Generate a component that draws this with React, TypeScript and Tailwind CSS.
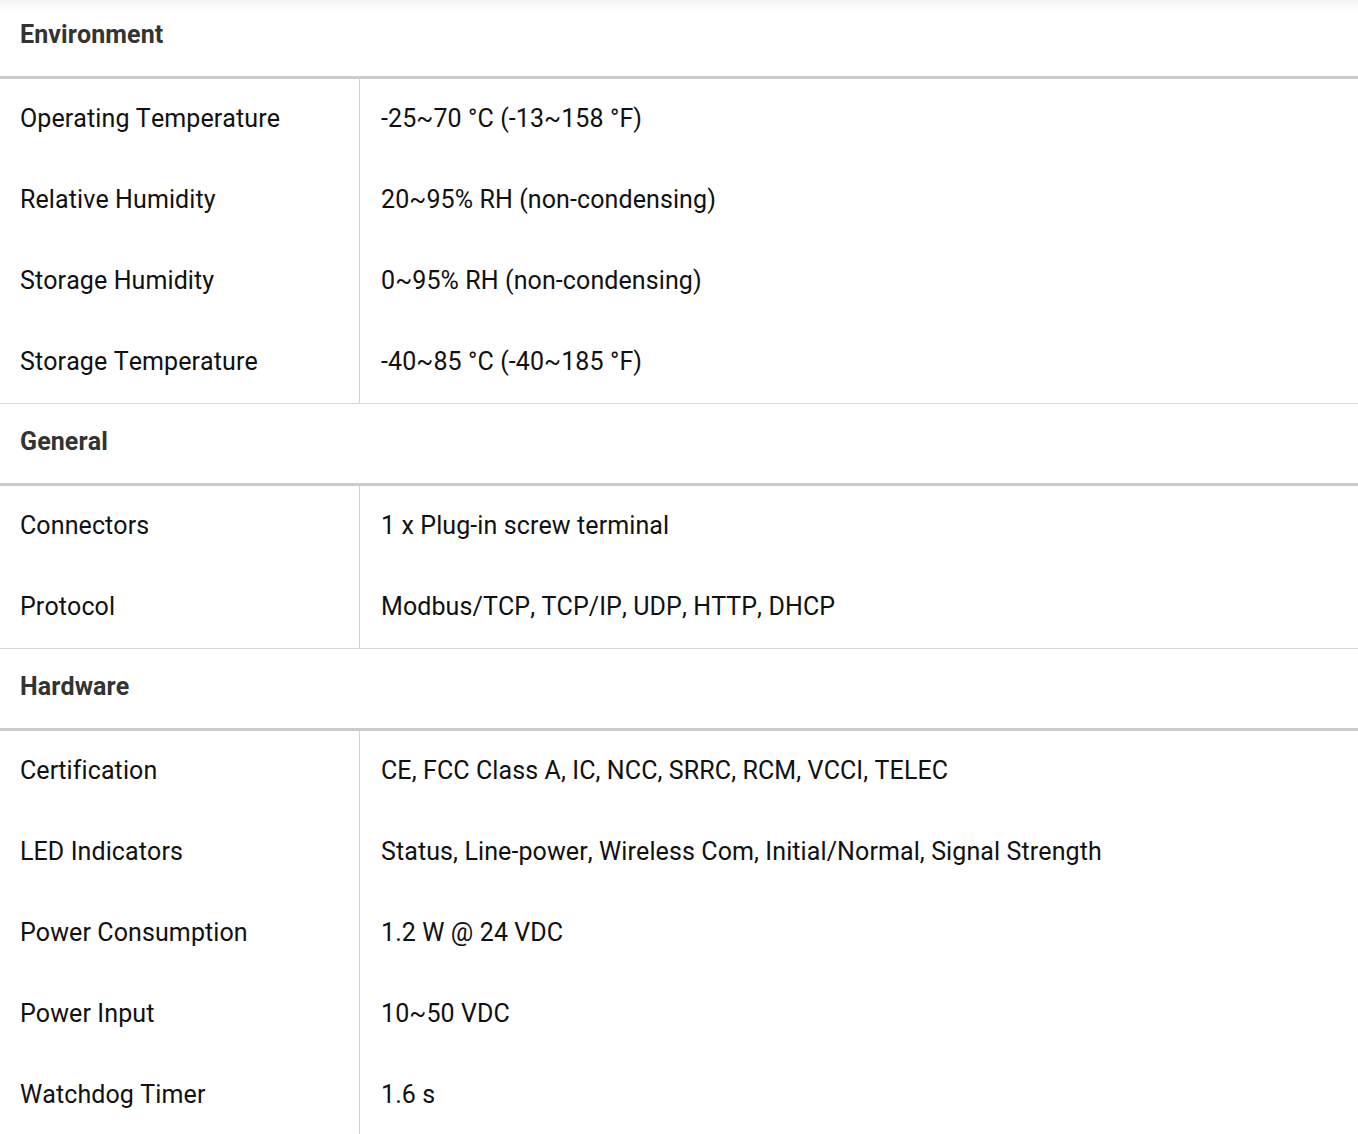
const sections = [
  {
    title: 'Environment',
    rows: [
      ['Operating Temperature', '-25~70 °C (-13~158 °F)'],
      ['Relative Humidity', '20~95% RH (non-condensing)'],
      ['Storage Humidity', '0~95% RH (non-condensing)'],
      ['Storage Temperature', '-40~85 °C (-40~185 °F)'],
    ],
  },
  {
    title: 'General',
    rows: [
      ['Connectors', '1 x Plug-in screw terminal'],
      ['Protocol', 'Modbus/TCP, TCP/IP, UDP, HTTP, DHCP'],
    ],
  },
  {
    title: 'Hardware',
    rows: [
      ['Certification', 'CE, FCC Class A, IC, NCC, SRRC, RCM, VCCI, TELEC'],
      ['LED Indicators', 'Status, Line-power, Wireless Com, Initial/Normal, Signal Strength'],
      ['Power Consumption', '1.2 W @ 24 VDC'],
      ['Power Input', '10~50 VDC'],
      ['Watchdog Timer', '1.6 s'],
    ],
  },
];

export default function App() {
  return (
    <div className="relative h-[1134px] overflow-hidden bg-white font-['Roboto',sans-serif] text-[25px] tracking-[0.1px] [font-kerning:none]">
      {/* shadow from the header above */}
      <div className="pointer-events-none absolute inset-x-0 top-0 z-10 h-[12px] bg-gradient-to-b from-black/[0.04] to-transparent" />
      <div className="-mt-[3px]">
        {sections.map((section, si) => (
          <div key={section.title} className={si > 0 ? 'border-t border-[#d6d6d6]' : ''}>
            <div className="flex h-[82px] items-center border-b-[3px] border-[#cccccc] px-[20px] pb-[3px]">
              <h3 className="font-bold text-[#333333]">{section.title}</h3>
            </div>
            <div className="grid grid-cols-[360px_1fr]">
              {section.rows.map(([label, value]) => (
                <div key={label} className="contents">
                  <div className="flex h-[81px] items-center border-r border-[#d4d4d4] px-[20px] pb-[2px] text-[#111111]">
                    {label}
                  </div>
                  <div className="flex h-[81px] items-center pb-[2px] pl-[21px] text-[#111111]">{value}</div>
                </div>
              ))}
            </div>
          </div>
        ))}
      </div>
    </div>
  );
}
